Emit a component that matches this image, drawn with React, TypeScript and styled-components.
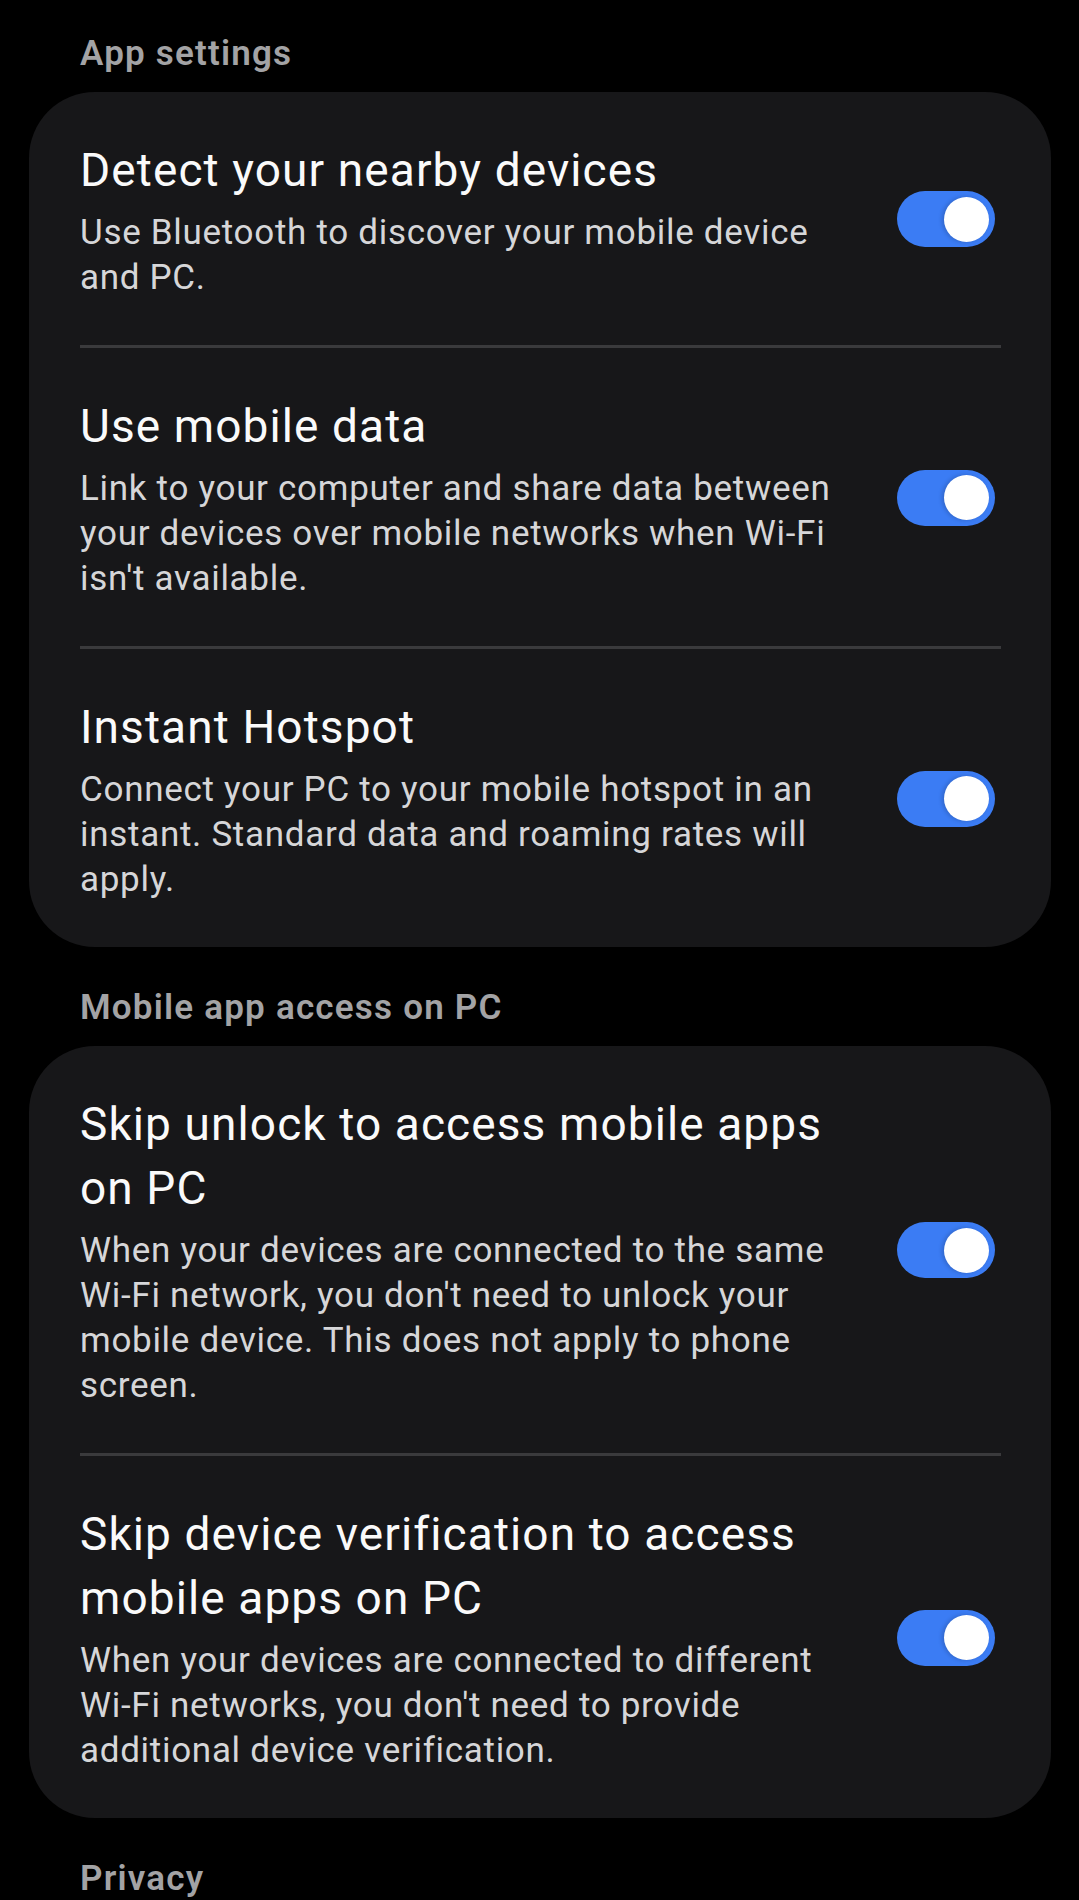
import styled, { createGlobalStyle } from 'styled-components'

const GlobalStyle = createGlobalStyle`
    html, body {
        margin: 0;
        padding: 0;
        background: #000;
    }
    body {
        font-family: Roboto, "Noto Sans", "Liberation Sans", sans-serif;
        -webkit-font-smoothing: antialiased;
    }
`

const Page = styled.div`
    min-height: 1900px;
    background: #000;
    padding: 34px 28px 0 29px;
    box-sizing: border-box;
`

const SectionHeader = styled.div<{ $first?: boolean }>`
    margin: ${({ $first }) => ($first ? '0' : '41px')} 0 18px 51px;
    font-size: 35px;
    line-height: 40px;
    font-weight: 600;
    letter-spacing: 1.2px;
    color: #a3a3a5;
`

const Card = styled.div`
    background: #171719;
    border-radius: 66px;
    padding: 0 50px 0 51px;
`

const Row = styled.div`
    display: flex;
    align-items: center;
    gap: 42px;
    padding: 46px 0 45px;
    & + & {
        border-top: 3px solid #3a3a3c;
    }
`

const TextCol = styled.div`
    flex: 1;
    min-width: 0;
`

const Title = styled.div`
    font-size: 46px;
    line-height: 64px;
    color: #fafafa;
    letter-spacing: 1.1px;
`

const Description = styled.div`
    margin-top: 8px;
    font-size: 35px;
    line-height: 45px;
    color: #d6d6d8;
    letter-spacing: 0.7px;
`

const Track = styled.div<{ $on: boolean }>`
    flex: none;
    display: flex;
    align-items: center;
    justify-content: ${({ $on }) => ($on ? 'flex-end' : 'flex-start')};
    width: 98px;
    height: 56px;
    margin-right: 6px;
    padding: 0 6px;
    box-sizing: border-box;
    border-radius: 28px;
    background: ${({ $on }) => ($on ? '#3b7cf4' : '#5b5b5e')};
`

const Thumb = styled.div`
    width: 45px;
    height: 45px;
    border-radius: 50%;
    background: #fff;
    box-shadow: -2px 0 4px rgba(0, 0, 0, 0.18);
`

type Setting = { title: string; description: string; on: boolean }

const appSettings: Setting[] = [
    {
        title: 'Detect your nearby devices',
        description: 'Use Bluetooth to discover your mobile device and PC.',
        on: true,
    },
    {
        title: 'Use mobile data',
        description:
            "Link to your computer and share data between your devices over mobile networks when Wi-Fi isn't available.",
        on: true,
    },
    {
        title: 'Instant Hotspot',
        description:
            'Connect your PC to your mobile hotspot in an instant. Standard data and roaming rates will apply.',
        on: true,
    },
]

const accessSettings: Setting[] = [
    {
        title: 'Skip unlock to access mobile apps on PC',
        description:
            "When your devices are connected to the same Wi-Fi network, you don't need to unlock your mobile device. This does not apply to phone screen.",
        on: true,
    },
    {
        title: 'Skip device verification to access mobile apps on PC',
        description:
            "When your devices are connected to different Wi-Fi networks, you don't need to provide additional device verification.",
        on: true,
    },
]

const Toggle = ({ on }: { on: boolean }) => (
    <Track $on={on}>
        <Thumb />
    </Track>
)

const SettingsCard = ({ items }: { items: Setting[] }) => (
    <Card>
        {items.map((item) => (
            <Row key={item.title}>
                <TextCol>
                    <Title>{item.title}</Title>
                    <Description>{item.description}</Description>
                </TextCol>
                <Toggle on={item.on} />
            </Row>
        ))}
    </Card>
)

const App = () => {
    return (
        <>
            <GlobalStyle />
            <Page>
                <SectionHeader $first>App settings</SectionHeader>
                <SettingsCard items={appSettings} />
                <SectionHeader>Mobile app access on PC</SectionHeader>
                <SettingsCard items={accessSettings} />
                <SectionHeader>Privacy</SectionHeader>
            </Page>
        </>
    )
}

export default App
